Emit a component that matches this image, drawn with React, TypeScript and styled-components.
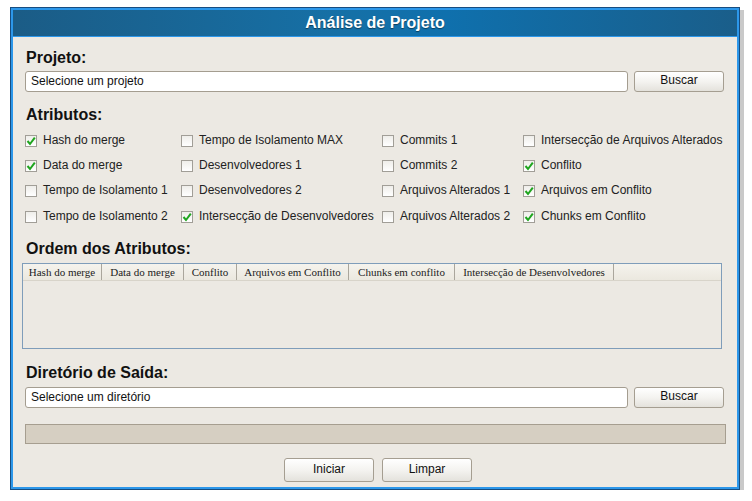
import React from "react";
import styled, { createGlobalStyle } from "styled-components";

const Global = createGlobalStyle`
  html, body { margin: 0; padding: 0; background: #ffffff; }
  body { font-family: "Liberation Sans", Arial, sans-serif; }
`;

const Page = styled.div`
  padding: 7px 0 0 10px;
`;

const Window = styled.div`
  box-sizing: border-box;
  width: 730px;
  height: 483px;
  border: 1px solid #174d80;
  background: #2c97ea;
  padding: 2px;
  display: flex;
  flex-direction: column;
  gap: 1px;
  box-shadow: 4px 3px 0 #c9c9c9;
`;

const TitleBar = styled.div`
  height: 26px;
  flex: none;
  display: flex;
  align-items: center;
  justify-content: center;
  background: linear-gradient(90deg, #1b5c86 0%, #1670a6 45%, #0f70ad 60%, #1a5e8a 100%);
  color: #ffffff;
  font-weight: bold;
  font-size: 16px;
  text-shadow: 0 1px 1px rgba(0, 0, 0, 0.45);
`;

const Content = styled.div`
  flex: 1;
  background: #ece9e3;
  display: flex;
  flex-direction: column;
  padding: 0 13px 0 12px;
`;

const Heading = styled.div<{ $top: number }>`
  margin-top: ${(p) => p.$top}px;
  padding-left: 1px;
  font-size: 16px;
  line-height: 19px;
  font-weight: bold;
  color: #111111;
`;

const InputRow = styled.div<{ $top: number }>`
  margin-top: ${(p) => p.$top}px;
  display: flex;
  gap: 6px;
  height: 21px;
`;

const TextField = styled.div`
  flex: 1;
  box-sizing: border-box;
  background: #ffffff;
  border: 1px solid #a49d90;
  border-radius: 3px;
  padding-left: 5px;
  font-size: 12px;
  line-height: 19px;
  color: #111111;
`;

const Button = styled.div<{ $h?: number }>`
  box-sizing: border-box;
  width: 90px;
  height: ${(p) => p.$h ?? 21}px;
  border: 1px solid #a59e91;
  border-radius: 3px;
  background: linear-gradient(180deg, #ffffff 0%, #f4f3f0 50%, #e4e2dc 100%);
  font-size: 12px;
  color: #111111;
  display: flex;
  align-items: center;
  justify-content: center;
  padding-bottom: ${(p) => ((p.$h ?? 21) > 22 ? 2 : 3)}px;
`;

const Grid = styled.div`
  margin-top: 3px;
  display: grid;
  grid-template-columns: 156px 201px 141px 1fr;
  grid-auto-rows: 25.3px;
`;

const CheckItem = styled.div`
  display: flex;
  align-items: center;
  gap: 6px;
  font-size: 12px;
  color: #222222;
  white-space: nowrap;
`;

const Box = styled.span`
  box-sizing: border-box;
  width: 12px;
  height: 12px;
  margin-top: 2px;
  flex: none;
  border: 1px solid #a19e97;
  background: linear-gradient(180deg, #efeeea 0%, #ffffff 100%);
  display: flex;
  align-items: center;
  justify-content: center;
`;

const Table = styled.div`
  margin: 5px 2px 0 -3px;
  height: 86px;
  box-sizing: border-box;
  border: 1px solid #7f9dba;
  background: #ece9e3;
`;

const HeaderRow = styled.div`
  display: flex;
  height: 16px;
  background: linear-gradient(180deg, #f5f3ed 0%, #ebe8df 100%);
  border-bottom: 1px solid #d8d4ca;
  font-family: "Liberation Serif", "Times New Roman", serif;
  font-size: 11px;
  color: #222222;
`;

const HeaderCell = styled.div<{ $w: number }>`
  width: ${(p) => p.$w}px;
  box-sizing: border-box;
  border-right: 1px solid #aaa69c;
  display: flex;
  align-items: center;
  justify-content: center;
  white-space: nowrap;
`;

const Progress = styled.div`
  margin: 16px -2px 0 0;
  height: 20px;
  box-sizing: border-box;
  border: 1px solid #a69e90;
  background: #d6cfc2;
`;

const Footer = styled.div`
  margin-top: 14px;
  display: flex;
  justify-content: center;
  gap: 8px;
  padding-left: 7px;
`;

const Check = () => (
  <svg width="10" height="10" viewBox="0 0 10 10">
    <path d="M1.5 5 L4 8 L8.8 1.6" fill="none" stroke="#1fa51f" strokeWidth="2" />
  </svg>
);

type Item = { label: string; on: boolean };

const items: Item[] = [
  { label: "Hash do merge", on: true },
  { label: "Tempo de Isolamento MAX", on: false },
  { label: "Commits 1", on: false },
  { label: "Intersecção de Arquivos Alterados", on: false },
  { label: "Data do merge", on: true },
  { label: "Desenvolvedores 1", on: false },
  { label: "Commits 2", on: false },
  { label: "Conflito", on: true },
  { label: "Tempo de Isolamento 1", on: false },
  { label: "Desenvolvedores 2", on: false },
  { label: "Arquivos Alterados 1", on: false },
  { label: "Arquivos em Conflito", on: true },
  { label: "Tempo de Isolamento 2", on: false },
  { label: "Intersecção de Desenvolvedores", on: true },
  { label: "Arquivos Alterados 2", on: false },
  { label: "Chunks em Conflito", on: true },
];

const columns: [string, number][] = [
  ["Hash do merge", 79],
  ["Data do merge", 82],
  ["Conflito", 53],
  ["Arquivos em Conflito", 112],
  ["Chunks em conflito", 106],
  ["Intersecção de Desenvolvedores", 159],
];

export default function App() {
  return (
    <>
      <Global />
      <Page>
        <Window>
          <TitleBar>Análise de Projeto</TitleBar>
          <Content>
            <Heading $top={11}>Projeto:</Heading>
            <InputRow $top={4}>
              <TextField>Selecione um projeto</TextField>
              <Button>Buscar</Button>
            </InputRow>
            <Heading $top={13}>Atributos:</Heading>
            <Grid>
              {items.map((it) => (
                <CheckItem key={it.label}>
                  <Box>{it.on && <Check />}</Box>
                  {it.label}
                </CheckItem>
              ))}
            </Grid>
            <Heading $top={11}>Ordem dos Atributos:</Heading>
            <Table>
              <HeaderRow>
                {columns.map(([name, w]) => (
                  <HeaderCell key={name} $w={w}>
                    {name}
                  </HeaderCell>
                ))}
              </HeaderRow>
            </Table>
            <Heading $top={14}>Diretório de Saída:</Heading>
            <InputRow $top={5}>
              <TextField>Selecione um diretório</TextField>
              <Button>Buscar</Button>
            </InputRow>
            <Progress />
            <Footer>
              <Button $h={24}>Iniciar</Button>
              <Button $h={24}>Limpar</Button>
            </Footer>
          </Content>
        </Window>
      </Page>
    </>
  );
}
